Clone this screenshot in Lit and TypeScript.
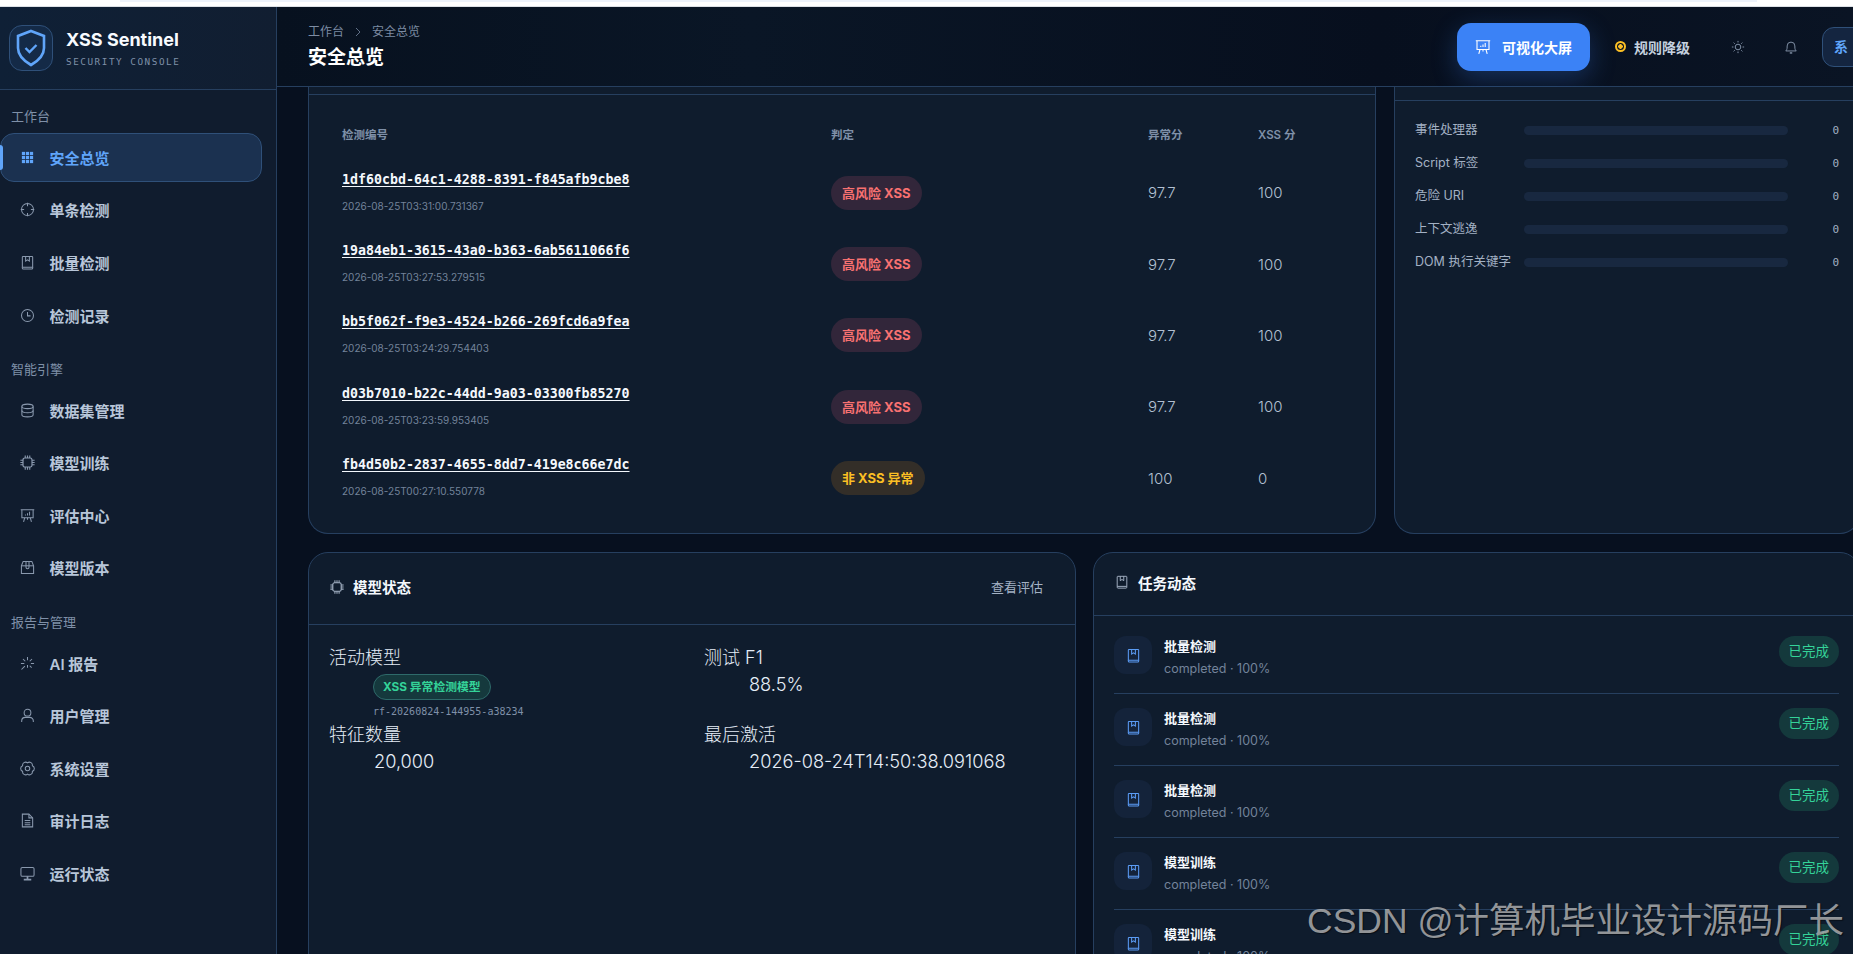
import { LitElement, html, css, svg } from 'lit';
import { customElement } from 'lit/decorators.js';

type Tone = 'danger' | 'warning';

const icons: Record<string, unknown> = {
  grid: svg`<g fill="currentColor" stroke="none"><rect x="2" y="2" width="3.4" height="3.4"/><rect x="6.3" y="2" width="3.4" height="3.4"/><rect x="10.6" y="2" width="3.4" height="3.4"/><rect x="2" y="6.3" width="3.4" height="3.4"/><rect x="6.3" y="6.3" width="3.4" height="3.4"/><rect x="10.6" y="6.3" width="3.4" height="3.4"/><rect x="2" y="10.6" width="3.4" height="3.4"/><rect x="6.3" y="10.6" width="3.4" height="3.4"/><rect x="10.6" y="10.6" width="3.4" height="3.4"/></g>`,
  aim: svg`<circle cx="8" cy="8" r="6.4"/><path d="M8 .8v3.6M8 11.6v3.6M.8 8h3.6M11.6 8h3.6"/>`,
  book: svg`<path d="M2.5 13V2.2a.7.7 0 0 1 .7-.7h9.6a.7.7 0 0 1 .7.7V13z"/><path d="M2.5 13v1a1 1 0 0 0 1 1h9a1 1 0 0 0 1-1v-1"/><path d="M6 1.5v5l2-1.4 2 1.4v-5"/>`,
  clock: svg`<circle cx="8" cy="8" r="6.4"/><path d="M8 4.2V8.4h3.2"/>`,
  db: svg`<ellipse cx="8" cy="3.6" rx="6" ry="2.4"/><path d="M2 3.6v8.8c0 1.3 2.7 2.4 6 2.4s6-1.1 6-2.4V3.6"/><path d="M2 8c0 1.3 2.7 2.4 6 2.4S14 9.3 14 8"/>`,
  cpu: svg`<rect x="3.2" y="3.2" width="9.6" height="9.6" rx="2" stroke-width="1.3"/><path stroke-width="1.2" d="M5.6.4v2.8M8 .4v2.800M10.400.4v2.800M5.600 12.800v2.800M8 12.800v2.800M10.400 12.800v2.800M.4 5.600h2.800M.4 8h2.800M.4 10.400h2.800M12.800 5.600h2.800M12.800 8h2.800M12.800 10.400h2.800"/>`,
  board: svg`<path d="M.8 1.800h14.400M2 1.800v8.700h12V1.800"/><path d="M5 10.500 3.800 14.800M11 10.500l1.200 4.300M8 10.500v2"/><path d="M5.800 8V6.800M8 8V5.500M10.200 8V4"/>`,
  box: svg`<path d="M1.500 6.200 3.400 1.500h9.200l1.900 4.700v8.300h-13z"/><path d="M1.500 6.200h13"/><path d="M6.400 1.500v6.300a1.600 1.600 0 0 0 3.200 0V1.500"/>`,
  spark: svg`<path d="M8 1v3.400M8 9.500v3M12.800 3.200l-2.400 2.400M5.200 10.800 1.600 14.400M15 8h-3.400M4.600 8H1M12.400 12.400l-2-2M5.600 5.600l-2.400-2.400"/>`,
  user: svg`<circle cx="8" cy="5" r="3.600"/><path d="M1.800 15v-1.200a3.800 3.800 0 0 1 3.800-3.800h4.800a3.800 3.800 0 0 1 3.800 3.800V15"/>`,
  gear: svg`<path d="M8 2A3.200 3.200 0 0 1 13.200 5A3.200 3.200 0 0 1 13.200 11A3.200 3.200 0 0 1 8 14A3.200 3.200 0 0 1 2.800 11A3.200 3.200 0 0 1 2.800 5A3.200 3.200 0 0 1 8 2z"/><circle cx="8" cy="8" r="2.400"/>`,
  doc: svg`<path d="M2.500 1.200h7l4 4v9.600h-11z"/><path d="M9.500 1.200v4h4M5 8h6M5 10.300h6M5 12.600h6"/>`,
  monitor: svg`<rect x="1" y="1.500" width="14" height="9.500" rx="1.500"/><path d="M8 11v3M4 14.500h8" stroke-width="1.800"/>`,
  sun: svg`<circle cx="8" cy="8" r="3.200"/><path d="M8 1v1.800M8 13.200V15M1 8h1.800M13.200 8H15M3 3l1.300 1.300M11.700 11.700 13 13M13 3l-1.300 1.300M4.300 11.700 3 13"/>`,
  bell: svg`<path d="M2 12.500c1-1 1.600-2 1.600-4.500V6.800a4.400 4.400 0 0 1 8.800 0V8c0 2.500.6 3.500 1.600 4.500z"/><path d="M6.600 14.800h2.800" stroke-width="1.600"/>`,
};

const icon = (name: string, size = 14) =>
  html`<svg class="icon" width=${size} height=${size} viewBox="0 0 16 16" fill="none" stroke="currentColor" stroke-width="1.100" aria-hidden="true">${icons[name]}</svg>`;

const navGroups = [
  {
    title: '工作台',
    items: [
      { icon: 'grid', label: '安全总览', active: true },
      { icon: 'aim', label: '单条检测' },
      { icon: 'book', label: '批量检测' },
      { icon: 'clock', label: '检测记录' },
    ],
  },
  {
    title: '智能引擎',
    items: [
      { icon: 'db', label: '数据集管理' },
      { icon: 'cpu', label: '模型训练' },
      { icon: 'board', label: '评估中心' },
      { icon: 'box', label: '模型版本' },
    ],
  },
  {
    title: '报告与管理',
    items: [
      { icon: 'spark', label: 'AI 报告' },
      { icon: 'user', label: '用户管理' },
      { icon: 'gear', label: '系统设置' },
      { icon: 'doc', label: '审计日志' },
      { icon: 'monitor', label: '运行状态' },
    ],
  },
];

const detections: { id: string; time: string; verdict: string; tone: Tone; anomaly: string; xss: string }[] = [
  { id: '1df60cbd-64c1-4288-8391-f845afb9cbe8', time: '2026-08-25T03:31:00.731367', verdict: '高风险 XSS', tone: 'danger', anomaly: '97.7', xss: '100' },
  { id: '19a84eb1-3615-43a0-b363-6ab5611066f6', time: '2026-08-25T03:27:53.279515', verdict: '高风险 XSS', tone: 'danger', anomaly: '97.7', xss: '100' },
  { id: 'bb5f062f-f9e3-4524-b266-269fcd6a9fea', time: '2026-08-25T03:24:29.754403', verdict: '高风险 XSS', tone: 'danger', anomaly: '97.7', xss: '100' },
  { id: 'd03b7010-b22c-44dd-9a03-03300fb85270', time: '2026-08-25T03:23:59.953405', verdict: '高风险 XSS', tone: 'danger', anomaly: '97.7', xss: '100' },
  { id: 'fb4d50b2-2837-4655-8dd7-419e8c66e7dc', time: '2026-08-25T00:27:10.550778', verdict: '非 XSS 异常', tone: 'warning', anomaly: '100', xss: '0' },
];

const features = ['事件处理器', 'Script 标签', '危险 URI', '上下文逃逸', 'DOM 执行关键字'];
const tasks = ['批量检测', '批量检测', '批量检测', '模型训练', '模型训练'];

@customElement('app-root')
export class AppRoot extends LitElement {
  static styles = css`
    :host {
      display: block;
      width: 1853px;
      height: 954px;
      overflow: hidden;
      position: relative;
      background: #07101f;
      font-family: Inter, 'Noto Sans CJK SC', sans-serif;
      color: #e5edf7;
    }

    * {
      box-sizing: border-box;
    }

    .icon {
      display: block;
      flex: none;
    }

    .browser-strip {
      height: 7px;
      background: #fff;
      border-bottom: 1px solid #dde1e6;
    }

    .browser-strip div {
      width: 1637px;
      height: 2px;
      margin-left: 120px;
      background: #eef3fb;
    }

    .shell {
      display: flex;
      height: 947px;
    }

    /* sidebar */
    .sidebar {
      flex: none;
      width: 277px;
      background: #101c2e;
      border-right: 1px solid #263f5f;
    }

    .brand {
      display: flex;
      align-items: center;
      gap: 13px;
      height: 83px;
      padding-left: 9px;
      border-bottom: 1px solid #263f5f;
      background: linear-gradient(90deg, #0f2036, #111e31);
    }

    .logo {
      display: flex;
      align-items: center;
      justify-content: center;
      width: 44px;
      height: 46px;
      border: 1px solid #2f5079;
      border-radius: 13px;
      background: #142a47;
    }

    .brand-name {
      font-size: 18px;
      font-weight: 700;
      line-height: 24px;
      color: #f8fbff;
    }

    .brand-sub {
      margin-top: 3px;
      font-family: 'DejaVu Sans Mono', monospace;
      font-size: 9.3px;
      line-height: 14px;
      letter-spacing: 1.55px;
      color: #7f90a8;
    }

    .nav {
      padding: 17px 14px 0 0;
    }

    .nav-label {
      height: 18px;
      margin: 0 0 8px 11px;
      font-size: 13px;
      line-height: 18px;
      color: #7f90a8;
    }

    .nav-group + .nav-group .nav-label {
      margin-top: 20.5px;
    }

    .nav-items {
      display: flex;
      flex-direction: column;
      gap: 4px;
    }

    .nav-item {
      position: relative;
      display: flex;
      align-items: center;
      gap: 15px;
      height: 48.6px;
      padding-left: 18.5px;
      border: 1px solid transparent;
      border-radius: 14px;
      font-size: 15px;
      font-weight: 600;
      color: #b8c6d9;
    }

    .nav-item .icon {
      color: #8a99ae;
    }

    .nav-item.active {
      border-color: #2f5079;
      background: #1b3150;
      color: #60a5fa;
    }

    .nav-item.active .icon {
      color: #60a5fa;
    }

    .nav-item.active::before {
      content: '';
      position: absolute;
      left: -1px;
      top: 11px;
      width: 3px;
      height: 25px;
      border-radius: 0 3px 3px 0;
      background: #60a5fa;
    }

    /* main column */
    .main {
      flex: none;
      width: 1576px;
      overflow: hidden;
    }

    .topbar {
      display: flex;
      align-items: center;
      height: 80px;
      padding-left: 31px;
      border-bottom: 1px solid #263f5f;
      background: linear-gradient(90deg, #07111f, #0a1626 30%, #070f1e 70%, #0a1424);
    }

    .heading {
      flex: none;
      width: 1149px;
    }

    .crumbs {
      display: flex;
      align-items: center;
      gap: 9px;
      margin-top: 2px;
      font-size: 12px;
      line-height: 18px;
      color: #7d8ca3;
    }

    .title {
      margin-top: 2px;
      font-size: 19px;
      font-weight: 700;
      line-height: 30px;
      color: #fff;
    }

    .actions {
      display: flex;
      flex: none;
      align-items: center;
    }

    .big-screen {
      display: flex;
      align-items: center;
      gap: 11px;
      width: 133px;
      height: 48px;
      padding-left: 18px;
      border-radius: 14px;
      background: #3b82f6;
      box-shadow: 0 8px 26px rgba(59, 130, 246, 0.28);
      font-size: 14px;
      font-weight: 700;
      color: #fff;
    }

    .degrade {
      display: flex;
      align-items: center;
      gap: 8px;
      margin: 0 28px 0 25px;
      font-size: 14px;
      font-weight: 600;
      color: #c4d0df;
    }

    .degrade i {
      display: block;
      width: 11px;
      height: 11px;
      border: 2px solid #fbbf24;
      border-radius: 50%;
      background: radial-gradient(circle, #fbbf24 0 2px, transparent 2.5px);
    }

    .icon-btn {
      display: flex;
      align-items: center;
      justify-content: center;
      width: 40px;
      height: 40px;
      margin-right: 13px;
      color: #8494aa;
    }

    .user-btn {
      flex: none;
      width: 100px;
      height: 40px;
      margin-left: -2px;
      padding-left: 11px;
      border: 1px solid #2f5079;
      border-radius: 12px;
      background: #142540;
      font-size: 14px;
      font-weight: 600;
      line-height: 38px;
      color: #60a5fa;
    }

    .content {
      display: flex;
      flex-direction: column;
      gap: 18px;
      width: 1552px;
      margin-left: 31px;
    }

    .row-top {
      display: grid;
      grid-template-columns: 1068px 1fr;
      gap: 18px;
    }

    .row-bottom {
      display: grid;
      grid-template-columns: 768px 1fr;
      gap: 17px;
    }

    .card {
      border: 1px solid #263f5f;
      border-radius: 20px;
      background: #0f1c2d;
    }

    .card.scrolled {
      border-top: none;
      border-radius: 0 0 20px 20px;
    }

    .stub {
      border-bottom: 1px solid #263f5f;
    }

    .stub-table {
      height: 8px;
    }

    .stub-side {
      height: 14px;
    }

    /* detections table */
    .table {
      padding: 17px 0 20.5px;
    }

    .tr {
      display: grid;
      grid-template-columns: 489px 317px 110px 1fr;
      align-items: center;
      height: 71.4px;
      padding-left: 33px;
    }

    .tr.th {
      height: 44px;
      font-size: 11.5px;
      font-weight: 600;
      color: #7f90a8;
    }

    .det-id {
      font-family: 'DejaVu Sans Mono', monospace;
      font-size: 13.28px;
      font-weight: 700;
      line-height: 18px;
      color: #f4f8fd;
      text-decoration: underline;
      text-underline-offset: 2px;
    }

    .det-time {
      margin-top: 10px;
      font-size: 10px;
      line-height: 14px;
      color: #73839a;
    }

    .cell-verdict {
      padding-top: 2px;
    }

    .score {
      padding-top: 2px;
      font-size: 15px;
      font-weight: 300;
      color: #b2c0d2;
    }

    .badge {
      display: inline-block;
      height: 34px;
      padding: 0 11px;
      border-radius: 17px;
      font-size: 13px;
      font-weight: 700;
      line-height: 34px;
    }

    .badge.danger {
      background: #32263a;
      color: #f87171;
    }

    .badge.warning {
      background: #332e28;
      color: #fbbf24;
    }

    /* feature bars */
    .features {
      display: flex;
      flex-direction: column;
      gap: 13px;
      padding: 19px 19px 0 20px;
    }

    .feature {
      display: grid;
      grid-template-columns: 109px 264px 1fr;
      align-items: center;
      height: 20px;
      font-size: 12.5px;
      color: #a3b1c4;
    }

    .feature-name {
      margin-top: -3px;
    }

    .track {
      height: 9px;
      border-radius: 5px;
      background: #182840;
    }

    .feature-val {
      font-family: 'DejaVu Sans Mono', monospace;
      font-size: 11px;
      text-align: right;
      padding-right: 1px;
    }

    /* model card */
    .card-head {
      display: flex;
      align-items: center;
      gap: 9px;
      border-bottom: 1px solid #263f5f;
      font-size: 14.5px;
      font-weight: 700;
      color: #f4f8fd;
    }

    .card-head .icon {
      color: #a3b1c4;
    }

    .model-head {
      height: 72px;
      padding: 0 32px 4px 21px;
    }

    .link {
      margin-left: auto;
      font-size: 13px;
      font-weight: 400;
      color: #a3b1c4;
    }

    .model-body {
      display: grid;
      grid-template-columns: 375px 1fr;
      padding: 19px 20px 0;
      margin: 0;
      font-size: 18px;
      line-height: 27px;
      color: #e5edf7;
    }

    .model-body dt {
      font-weight: 300;
    }

    .model-body dd {
      margin: 0 0 0 45px;
      font-size: 18.2px;
      font-weight: 300;
    }

    .model-body .with-badge {
      margin-left: 44px;
      line-height: 1;
    }

    .model-badge {
      display: inline-block;
      height: 26px;
      margin-top: 3px;
      padding: 0 9px;
      border: 1px solid #2e6a6a;
      border-radius: 13px;
      background: #15393d;
      font-size: 11.8px;
      font-weight: 700;
      line-height: 24px;
      color: #34d399;
      vertical-align: top;
    }

    .model-sub {
      margin: 5px 0 2px;
      font-family: 'DejaVu Sans Mono', monospace;
      font-size: 10px;
      line-height: 14px;
      color: #7f90a8;
    }

    /* task card */
    .task-head {
      height: 63px;
      padding: 0 21px 4px;
    }

    .tasks {
      padding: 6px 20px 0;
    }

    .task {
      display: flex;
      align-items: flex-start;
      gap: 12px;
      padding: 14px 0;
      border-bottom: 1px solid #263f5f;
    }

    .task-icon {
      display: flex;
      flex: none;
      align-items: center;
      justify-content: center;
      width: 38px;
      height: 38px;
      border-radius: 12px;
      background: #14233a;
      color: #5b9cf5;
    }

    .task-name {
      font-size: 13px;
      font-weight: 600;
      line-height: 20px;
      color: #f4f8fd;
    }

    .task-sub {
      margin-top: 3px;
      font-size: 12.5px;
      line-height: 20px;
      color: #73839a;
    }

    .status {
      margin-left: auto;
      height: 31px;
      padding: 0 10px;
      border-radius: 16px;
      background: #14393c;
      font-size: 13.5px;
      line-height: 31px;
      color: #34d399;
    }

    .watermark {
      position: absolute;
      left: 1307px;
      top: 898px;
      font-family: 'Liberation Sans', 'Noto Sans CJK SC', sans-serif;
      font-size: 35.5px;
      line-height: 46px;
      white-space: nowrap;
      color: rgba(200, 200, 200, 0.72);
      text-shadow: 1px 1px 1px rgba(0, 0, 0, 0.5);
    }
  `;

  private renderSidebar() {
    return html`
      <aside class="sidebar">
        <div class="brand">
          <div class="logo">
            <svg width="30" height="38" viewBox="0 0 30 38" fill="none" stroke="#60a5fa" aria-hidden="true">
              <path d="M15 2 28 7v12c0 8-6 13-13 17C8 32 2 27 2 19V7z" stroke-width="2.6" />
              <path d="M9.500 19l4 4 7-7" stroke-width="2.4" />
            </svg>
          </div>
          <div>
            <div class="brand-name">XSS Sentinel</div>
            <div class="brand-sub">SECURITY CONSOLE</div>
          </div>
        </div>
        <nav class="nav">
          ${navGroups.map(
            (group) => html`
              <div class="nav-group">
                <div class="nav-label">${group.title}</div>
                <div class="nav-items">
                  ${group.items.map(
                    (item) => html`
                      <div class="nav-item ${item.active ? 'active' : ''}">${icon(item.icon, 15)}<span>${item.label}</span></div>
                    `
                  )}
                </div>
              </div>
            `
          )}
        </nav>
      </aside>
    `;
  }

  private renderTopbar() {
    return html`
      <header class="topbar">
        <div class="heading">
          <div class="crumbs">
            <span>工作台</span>
            <svg width="10" height="10" viewBox="0 0 10 10" fill="none" stroke="#5f6f86" aria-hidden="true"><path d="M3 1l4 4-4 4" /></svg>
            <span>安全总览</span>
          </div>
          <div class="title">安全总览</div>
        </div>
        <div class="actions">
          <div class="big-screen">${icon('board', 16)}<span>可视化大屏</span></div>
          <div class="degrade"><i></i><span>规则降级</span></div>
          <div class="icon-btn">${icon('sun')}</div>
          <div class="icon-btn">${icon('bell')}</div>
          <div class="user-btn">系</div>
        </div>
      </header>
    `;
  }

  private renderDetections() {
    return html`
      <section class="card scrolled">
        <div class="stub stub-table"></div>
        <div class="table">
          <div class="tr th">
            <span>检测编号</span>
            <span>判定</span>
            <span>异常分</span>
            <span>XSS 分</span>
          </div>
          ${detections.map(
            (row) => html`
              <div class="tr">
                <div>
                  <div class="det-id">${row.id}</div>
                  <div class="det-time">${row.time}</div>
                </div>
                <div class="cell-verdict"><span class="badge ${row.tone}">${row.verdict}</span></div>
                <span class="score">${row.anomaly}</span>
                <span class="score">${row.xss}</span>
              </div>
            `
          )}
        </div>
      </section>
    `;
  }

  private renderFeatures() {
    return html`
      <section class="card scrolled">
        <div class="stub stub-side"></div>
        <div class="features">
          ${features.map(
            (name) => html`
              <div class="feature">
                <span class="feature-name">${name}</span>
                <div class="track"></div>
                <span class="feature-val">0</span>
              </div>
            `
          )}
        </div>
      </section>
    `;
  }

  private renderModel() {
    return html`
      <section class="card">
        <div class="card-head model-head">
          ${icon('cpu')}<span>模型状态</span><span class="link">查看评估</span>
        </div>
        <dl class="model-body">
          <div>
            <dt>活动模型</dt>
            <dd class="with-badge">
              <span class="model-badge">XSS 异常检测模型</span>
              <div class="model-sub">rf-20260824-144955-a38234</div>
            </dd>
          </div>
          <div>
            <dt>测试 F1</dt>
            <dd>88.5%</dd>
          </div>
          <div>
            <dt>特征数量</dt>
            <dd>20,000</dd>
          </div>
          <div>
            <dt>最后激活</dt>
            <dd>2026-08-24T14:50:38.091068</dd>
          </div>
        </dl>
      </section>
    `;
  }

  private renderTasks() {
    return html`
      <section class="card">
        <div class="card-head task-head">${icon('book')}<span>任务动态</span></div>
        <div class="tasks">
          ${tasks.map(
            (name) => html`
              <div class="task">
                <div class="task-icon">${icon('book', 15)}</div>
                <div>
                  <div class="task-name">${name}</div>
                  <div class="task-sub">completed · 100%</div>
                </div>
                <span class="status">已完成</span>
              </div>
            `
          )}
        </div>
      </section>
    `;
  }

  render() {
    return html`
      <div class="browser-strip"><div></div></div>
      <div class="shell">
        ${this.renderSidebar()}
        <main class="main">
          ${this.renderTopbar()}
          <div class="content">
            <div class="row-top">${this.renderDetections()} ${this.renderFeatures()}</div>
            <div class="row-bottom">${this.renderModel()} ${this.renderTasks()}</div>
          </div>
        </main>
      </div>
      <div class="watermark">CSDN @计算机毕业设计源码厂长</div>
    `;
  }
}
